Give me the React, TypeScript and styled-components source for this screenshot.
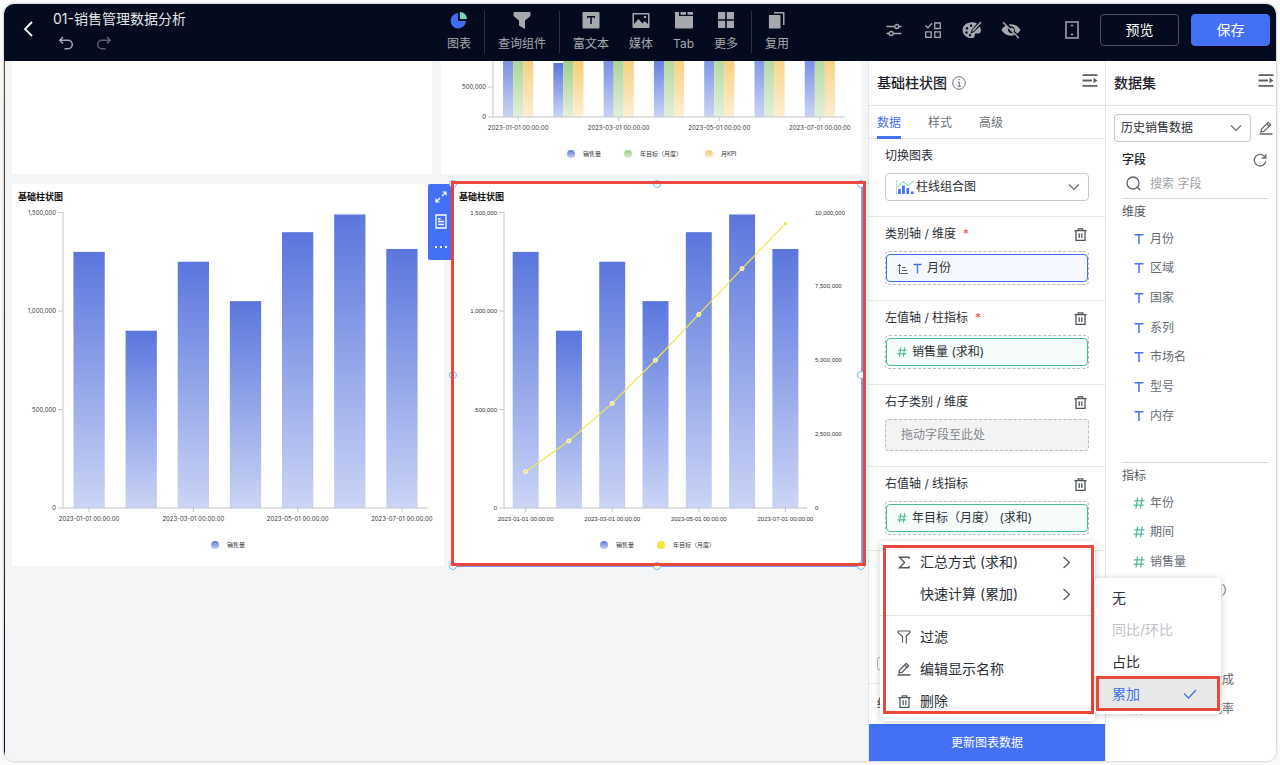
import React from "react";
import styled, { createGlobalStyle, css } from "styled-components";

const C = {
  blue: "#4370f5",
  navy: "#040b1e",
  text: "#2b2f36",
  sub: "#666b73",
  line: "#e3e5e8",
  canvas: "#f4f5f7",
  green: "#4fb998",
  red: "rgba(233, 62, 50, 0.95)",
};

const Global = createGlobalStyle`
  * { box-sizing: border-box; }
  body {
    margin: 0;
    background: #fafafa;
    color: ${C.text};
    font: 12px/18px Inter, "Noto Sans CJK SC", sans-serif;
  }
  button, input, select { font: inherit; color: inherit; }
  button { cursor: pointer; border: 0; background: none; padding: 0; }
  h1, h2, h3, p, ul { margin: 0; padding: 0; font-size: 12px; font-weight: 400; }
  ul { list-style: none; }
  svg { display: block; flex: none; }
`;

const Frame = styled.div`
  margin: 4px;
  min-height: calc(100vh - 8px);
  display: flex;
  flex-direction: column;
  border-radius: 10px;
  overflow: hidden;
  background: #fff;
  box-shadow: 0 0 3px rgba(0, 0, 0, 0.3);
`;

/* ---------- top bar ---------- */

const TopBar = styled.header`
  height: 57px;
  flex: none;
  display: flex;
  align-items: center;
  background: ${C.navy};
  color: #a6a8ad;
  padding-right: 6px;
`;

const TopLeft = styled.div`
  flex: 0 1 443px;
  display: flex;
  align-items: center;
  gap: 20px;
  padding: 0 0 7px 19px;
`;

const TitleBlock = styled.div`
  display: flex;
  flex-direction: column;
  gap: 7px;
`;

const PageTitle = styled.h1`
  font-size: 14px;
  line-height: 20px;
  color: #e4e5e8;
`;

const History = styled.div`
  display: flex;
  gap: 22px;
  padding-left: 5px;
`;

const IconButton = styled.button<{ $w?: number }>`
  display: flex;
  align-items: center;
  justify-content: center;
  width: ${(p) => p.$w ?? 20}px;
  color: inherit;

  &:disabled {
    opacity: 0.55;
  }
`;

const Tools = styled.nav`
  display: flex;
  align-items: center;
  padding-bottom: 2px;
`;

const ToolGroup = styled.div`
  display: flex;
  gap: 20px;

  & + & {
    margin-left: 13px;
    padding-left: 13px;
    border-left: 1px solid #2b3142;
  }
`;

const Tool = styled.button`
  display: flex;
  flex-direction: column;
  align-items: center;
  gap: 6px;
  color: #a6a8ad;
`;

const TopRight = styled.div`
  display: flex;
  align-items: center;
  gap: 19px;
  margin-left: auto;
  padding-bottom: 6px;
`;

const TopButtons = styled.div`
  display: flex;
  align-items: center;
  gap: 12px;
`;

const TopButton = styled.button<{ $primary?: boolean }>`
  width: 79px;
  height: 32px;
  border-radius: 4px;
  border: 1px solid ${(p) => (p.$primary ? C.blue : "#4b5060")};
  background: ${(p) => (p.$primary ? C.blue : "transparent")};
  color: #fff;
  font-size: 14px;
`;

const Device = styled.div`
  margin-left: 23px;
`;

/* ---------- body ---------- */

const Body = styled.main`
  flex: 1;
  display: grid;
  grid-template-columns: minmax(0, 1fr) 237px 171px;
  background: ${C.canvas};
`;

const Canvas = styled.section`
  padding: 0 7px 40px 7px;
  border-left: 1px solid #2a2129;
  border-image: linear-gradient(#6b4423, #3a1f1a 70%, #0b1224 85%) 1;
`;

const CanvasRow = styled.div<{ $cols: string }>`
  display: grid;
  grid-template-columns: ${(p) => p.$cols};
  gap: 9px;
  margin-bottom: 10px;
`;

const Card = styled.article`
  position: relative;
  background: #fff;
`;

const CardTitle = styled.h3`
  font-size: 9px;
  line-height: 12px;
  font-weight: 700;
  padding: 7px 6px 0;
  color: #111;
`;

const ChartSvg = styled.svg<{ $font?: string }>`
  width: 100%;
  height: auto;
  overflow: hidden;
  font-family: ${(p) => p.$font ?? "Inter"}, "Noto Sans CJK SC", sans-serif;
  font-size: 6px;
  fill: #333;
`;

const SelectionRing = styled.div`
  position: absolute;
  inset: 0 -2px -1px 0;
  border: solid #7f98f4;
  border-width: 0 2px 2px 0;
`;

const Handle = styled.i<{ $x: string; $y: string }>`
  position: absolute;
  left: ${(p) => p.$x};
  top: ${(p) => p.$y};
  width: 8px;
  height: 8px;
  margin: -4px;
  border: 1px solid #6bb9f2;
  border-radius: 50%;
  background: #fff;
`;

const RedMark = styled.div<{ $inset: string }>`
  position: absolute;
  inset: ${(p) => p.$inset};
  border: 3px solid ${C.red};
  pointer-events: none;
`;

const SideTools = styled.div`
  position: absolute;
  top: 0;
  right: 100%;
  width: 25px;
  height: 76px;
  display: flex;
  flex-direction: column;
  align-items: center;
  color: #fff;
  background: ${C.blue};
  border-radius: 2px 0 0 2px;

  button { flex: 1; }
`;

/* ---------- panels ---------- */

const Panel = styled.aside`
  position: relative;
  display: flex;
  flex-direction: column;
  background: #fff;
  border-left: 1px solid ${C.line};
`;

const ConfigPanel = styled(Panel)`
  z-index: 2;
`;

const PanelHead = styled.div<{ $end: number }>`
  height: 45px;
  display: flex;
  align-items: center;
  gap: 5px;
  padding: 0 ${(p) => p.$end}px 0 8px;
  border-bottom: 1px solid ${C.line};
`;

const PanelTitle = styled.h2`
  font-size: 14px;
  line-height: 20px;
  font-weight: 500;
  color: #1d2129;
`;

const HeadAction = styled.button`
  margin: 0 0 5px auto;
  color: #5c6066;
`;

const Tabs = styled.div`
  height: 33px;
  display: flex;
  gap: 27px;
  padding-left: 8px;
  border-bottom: 1px solid ${C.line};
`;

const Tab = styled.button<{ $on?: boolean }>`
  height: 33px;
  padding-top: 3px;
  color: ${(p) => (p.$on ? C.blue : "#6b7078")};
  border-bottom: 3px solid ${(p) => (p.$on ? C.blue : "transparent")};
`;

const Section = styled.section`
  display: flex;
  flex-direction: column;
  gap: 8px;
  padding: 8px 16px 15px;
  border-bottom: 1px solid ${C.line};
`;

const SectionHead = styled.div`
  display: flex;
  justify-content: space-between;
  align-items: center;
  padding-right: 2px;
  color: #4f545c;
`;

const SectionLabel = styled.label`
  display: flex;
  gap: 7px;
  color: ${C.text};
`;

const Required = styled.span`
  color: #f0504a;
`;

const SelectBox = styled.div<{ $pad: number }>`
  display: flex;
  align-items: center;
  flex: 1;
  min-width: 0;
  height: 28px;
  padding: 0 8px 0 ${(p) => p.$pad}px;
  border: 1px solid #c3c6cb;
  border-radius: 4px;
  color: ${C.sub};
`;

const Select = styled.select`
  flex: 1;
  min-width: 0;
  height: 26px;
  margin-right: -12px;
  padding: 0;
  border: 0;
  outline: 0;
  appearance: none;
  background: transparent;
  color: ${C.text};
`;

const DropZone = styled.div<{ $empty?: boolean }>`
  position: relative;
  display: flex;
  align-items: center;
  height: ${(p) => (p.$empty ? 32 : 34)}px;
  border: 1px dashed #b9bcc1;
  border-radius: 4px;
  ${(p) =>
    p.$empty &&
    css`
      padding-left: 15px;
      background: #f3f3f3;
      color: #83868c;
    `}
`;

const Chip = styled.button<{ $tone: "blue" | "green" }>`
  flex: 1;
  height: 28px;
  display: flex;
  align-items: center;
  gap: 5px;
  padding-left: 10px;
  border: 1px solid ${(p) => (p.$tone === "blue" ? C.blue : C.green)};
  border-radius: 4px;
  background: ${(p) => (p.$tone === "blue" ? "#f6f8ff" : "#f6fcfa")};
  color: ${C.text};
`;

const OptionSection = styled.section`
  min-height: 133px;
  display: flex;
  align-items: flex-end;
  padding: 0 8px 13px;
  border-bottom: 1px solid ${C.line};
`;

const Checkbox = styled.input`
  appearance: none;
  width: 13px;
  height: 13px;
  margin: 0;
  border: 1px solid #b9bcc1;
  border-radius: 2px;
`;

const LastSection = styled.section`
  height: 40px;
  padding: 11px 8px;
`;

const UpdateButton = styled.button`
  height: 37px;
  margin-top: auto;
  background: ${C.blue};
  color: #fff;
`;

/* ---------- menus ---------- */

const Menu = styled.div`
  position: absolute;
  background: #fff;
  border-radius: 4px;
  box-shadow: 0 1px 7px rgba(0, 0, 0, 0.2);
`;

const FieldMenu = styled(Menu)`
  top: 39px;
  left: -6px;
  width: 215px;
  padding: 5px 0 4px;
`;

const SubMenu = styled(Menu)`
  top: 37px;
  left: 100%;
  width: 126px;
  padding: 4px 0;
`;

const MenuItem = styled.button<{ $disabled?: boolean; $on?: boolean }>`
  position: relative;
  width: 100%;
  height: 32px;
  display: flex;
  align-items: center;
  gap: 9px;
  padding: 0 24px 0 17px;
  font-size: 14px;
  text-align: left;
  color: ${(p) => (p.$disabled ? "#c2c4c9" : p.$on ? C.blue : C.text)};
  background: ${(p) => (p.$on ? "#e7e9e9" : "transparent")};

  svg { color: ${(p) => (p.$on ? C.blue : "#565b63")}; }
  svg:last-of-type:not(:first-child) { margin-left: auto; }
`;

const MenuIcon = styled.span`
  width: 14px;
  display: flex;
  justify-content: center;
`;

const MenuRule = styled.hr`
  margin: 5px 0;
  border: 0;
  border-top: 1px solid ${C.line};
`;

/* ---------- dataset ---------- */

const SourceRow = styled.div`
  display: flex;
  align-items: center;
  gap: 8px;
  padding: 8px 3px 0 8px;
  color: ${C.sub};
`;

const FieldArea = styled.div`
  padding: 9px 8px 0 16px;
`;

const FieldHead = styled.div`
  display: flex;
  justify-content: space-between;
  color: ${C.sub};
`;

const FieldTitle = styled.h3`
  font-weight: 500;
  color: #1d2129;
`;

const Search = styled.label`
  display: flex;
  align-items: center;
  gap: 9px;
  height: 30px;
  padding-left: 4px;
  color: #5c6066;
  border-bottom: 1px solid #d5d7da;
`;

const SearchInput = styled.input`
  flex: 1;
  min-width: 0;
  border: 0;
  outline: 0;
  padding: 0;
  background: none;

  &::placeholder { color: #a0a3a9; opacity: 1; }
`;

const GroupTitle = styled.h3<{ $ruled?: boolean }>`
  padding: 3px 0 2px;
  line-height: 20px;
  color: #55595f;
  ${(p) =>
    p.$ruled &&
    css`
      margin-top: 31px;
      border-top: 1px solid #d5d7da;
    `}
`;

const FieldList = styled.ul<{ $h: number }>`
  height: ${(p) => p.$h}px;
  display: flex;
  flex-direction: column;
`;

const FieldItem = styled.li`
  flex: 1;
  display: flex;
  align-items: center;
  gap: 5px;
  padding-left: 11px;
  white-space: nowrap;
  color: ${C.sub};
`;

/* ---------- icons ---------- */

type IcoProps = { w: number; h: number; s?: number; fill?: boolean; children: React.ReactNode };
const Ico = ({ w, h, s = 1.3, fill, children }: IcoProps) => (
  <svg
    width={w}
    height={h}
    viewBox={`0 0 ${w} ${h}`}
    fill={fill ? "currentColor" : "none"}
    stroke={fill ? "none" : "currentColor"}
    strokeWidth={s}
    aria-hidden="true"
  >
    {children}
  </svg>
);

const BlueIcon = styled.span`
  color: ${C.blue};
`;
const GreenIcon = styled.span`
  color: ${C.green};
`;

const ChevronDown = () => <Ico w={12} h={8} s={1.2}><path d="M1 1.5l5 5 5-5" /></Ico>;
const ChevronRight = () => <Ico w={9} h={13}><path d="M1.5 1l6 5.500-6 5.500" /></Ico>;
const Trash = () => (
  <Ico w={13} h={13} s={1.3}><path d="M.5 2.700h12M4.300 2.500V.8h4.400v1.700M2 3v9.300h9V3M5.200 5.300v4.600M7.800 5.300v4.600" /></Ico>
);
const TextType = () => (
  <BlueIcon><Ico w={12} h={12} s={1.5}><path d="M1.500 1.800h9M6 1.800V11" /></Ico></BlueIcon>
);
const NumType = ({ size = 12 }: { size?: number }) => (
  <GreenIcon>
    <svg width={size} height={size} viewBox="0 0 12 12" fill="none" stroke="currentColor" strokeWidth="1.3" aria-hidden="true">
      <path d="M4.600.5L3 11.500M9.200.5L7.600 11.500M1.200 3.800h10.300M.5 8.200h10.300" />
    </svg>
  </GreenIcon>
);
const Collapse = () => (
  <Ico w={16} h={13} s={1.8}>
    <path d="M.5 1.200h15M.5 6.500h9.500M.5 11.800h15" />
    <path d="M11.500 3.800v5.400l4-2.700z" fill="currentColor" stroke="none" />
  </Ico>
);
const Pencil = () => (
  <Ico w={14} h={14} s={1.3}><path d="M.5 13h13M2.500 8.200L9.200 1.400l2.400 2.300-6.700 6.700-2.900.6zM7.800 2.900l2.300 2.300" /></Ico>
);

const toolGroups = [
  [
    {
      label: "图表",
      icon: (
        <svg width="18" height="18" viewBox="0 0 18 18" aria-hidden="true">
          <path d="M8 2A7.700 7.700 0 1 0 16 10H8z" fill="#3f6df6" />
          <path d="M10 1A7.200 7.200 0 0 1 17 8H10z" fill="#6fd9bd" />
        </svg>
      ),
    },
  ],
  [
    {
      label: "查询组件",
      icon: <Ico w={18} h={18} fill><path d="M1.500 1h15q1 0 1 1v3l-5.500 4.500V18l-6-3.500V9.500L.5 5V2q0-1 1-1z" /></Ico>,
    },
  ],
  [
    {
      label: "富文本",
      icon: <Ico w={18} h={18} fill><path fillRule="evenodd" d="M1.500 1h15q1 0 1 1v14.500q0 1-1 1h-15q-1 0-1-1V2q0-1 1-1zM5 5v2.200h1V6.500h2.300V13H9.800V6.500H12v.7h1V5z" /></Ico>,
    },
    {
      label: "媒体",
      icon: <Ico w={18} h={18} fill><path fillRule="evenodd" d="M1.500 2h15q1 0 1 1v13q0 1-1 1h-15q-1 0-1-1V3q0-1 1-1zM2 3.500v9.500l4.500-5 4 4.500 2-2.500 3.500 3V3.500zM12 5h2v2h-2z" /></Ico>,
    },
    {
      label: "Tab",
      icon: <Ico w={20} h={18} fill><path d="M1 1h4v4h14v11.500q0 1-1 1H2q-1 0-1-1zM6.500 1H12v2.800H6.500zM13.500 1H19v2.800h-5.500z" /></Ico>,
    },
    {
      label: "更多",
      icon: <Ico w={18} h={18} fill><path d="M1 1h7.200v7.200H1zM9.800 1H17v7.200H9.800zM1 9.800h7.200V17H1zM9.800 9.800H17V17H9.800z" /></Ico>,
    },
  ],
  [
    {
      label: "复用",
      icon: (
        <Ico w={18} h={18} fill>
          <path d="M1.500 4h10q1 0 1 1v12.500h-11q-.6 0-.6-.6V5q0-1 .6-1zM6 1h9.500q1 0 1 1v12H15V2.500H6z" />
        </Ico>
      ),
    },
  ],
];

const viewIcons = [
  {
    label: "参数",
    icon: <Ico w={16} h={14}><path d="M.5 3.500h8M13 3.500h2.500M.5 10.500h2.500M7.500 10.500h8" /><circle cx="10.800" cy="3.500" r="2" /><circle cx="5.200" cy="10.500" r="2" /></Ico>,
  },
  {
    label: "选择",
    icon: <Ico w={18} h={18}><path d="M1.500 4.500l2.300 2.300L8 2.300M10.800 2h5.500v5.500h-5.500zM1.700 10.800h5.500v5.500H1.700zM10.800 10.800h5.500v5.500h-5.500z" /></Ico>,
  },
  {
    label: "主题",
    icon: (
      <Ico w={20} h={18} fill>
        <path fillRule="evenodd" d="M10 1.300c2 0 3.600.3 5 1.200L9.500 9l-1 3.500 3.500-1.500 5.700-5.500c1 1.700 1.500 4 .8 5.700-.7 1.500-2.500 1.300-4 1.300-2.300 0-1.600 1.600-1.800 2.800-.2 1.600-1.700 1.700-3.200 1.700C4.500 17 .6 13.500.6 9.200S4.500 1.300 10 1.300zM5 6a1.300 1.300 0 1 0 .01 0zM9 3.300a1.300 1.300 0 1 0 .01 0zM4.500 10.200a1.300 1.300 0 1 0 .01 0zM8 13a1.200 1.200 0 1 0 .01 0z" />
        <path d="M18.500.5l1 1-7.500 8.500-2 .8.700-2z" />
      </Ico>
    ),
  },
  {
    label: "隐藏",
    icon: (
      <Ico w={20} h={18} fill>
        <path d="M5.300 4.200C3.200 5.300 1.600 7 .5 9c1.900 3.400 5.300 5.700 9.500 5.700 1.400 0 2.700-.2 3.800-.7l-2-2A4 4 0 0 1 7 7zM7.800 3.500C12.600 2.500 17.300 4.700 19.500 9c-.8 1.500-1.900 2.700-3.200 3.700l-2.600-2.400A4 4 0 0 0 9 5.300zM9 7.500L12.300 10.800A2.300 2.300 0 0 0 9 7.500z" />
        <path d="M2.500.8l16 15.800-1 1L1.500 1.800z" />
      </Ico>
    ),
  },
];

/* ---------- charts ---------- */

const MONTHS = ["2023-01-01 00:00:00", "", "2023-03-01 00:00:00", "", "2023-05-01 00:00:00", "", "2023-07-01 00:00:00"];
const SALES = [1.3, 0.9, 1.25, 1.05, 1.4, 1.49, 1.315];
const TARGET = [1.23, 1.04, 1.27, 1.46, 1.55, 1.55, 1.52];
const KPI = [1.2, 1.1, 1.2, 1.25, 1.2, 1.4, 1.3];
const CUMULATIVE = [1.23, 2.27, 3.54, 5.0, 6.55, 8.1, 9.62];

type Legend = { x: number; fill: string; label: string };
type ChartProps = {
  id: string;
  w: number;
  h: number;
  left: number;
  right: number;
  base: number;
  unit: number;
  ticks: number[];
  series: { data: number[]; tone: string }[];
  legendY: number;
  legend: Legend[];
  line?: number[];
  font?: string;
};

const TONES: Record<string, [string, string]> = {
  blue: ["#5a76dd", "#cbd4f5"],
  green: ["#9bcb80", "#e1f0da"],
  yellow: ["#f4c765", "#fdefd3"],
};

const Chart = ({ id, w, h, left, right, base, unit, ticks, series, legendY, legend, line, font }: ChartProps) => {
  const pitch = (right - left) / 7;
  const bw = (pitch * 0.6) / series.length;
  const cx = (i: number) => left + pitch * (i + 0.5);
  const points = line?.map((v, i) => [cx(i), base - (v / 10) * unit * 1.5]);
  return (
    <ChartSvg viewBox={`0 0 ${w} ${h}`} role="img" aria-label="基础柱状图" $font={font}>
      <defs>
        {Object.entries(TONES).map(([k, [a, b]]) => (
          <linearGradient key={k} id={`${id}-${k}`} x1="0" y1="0" x2="0" y2="1">
            <stop offset="0" stopColor={a} />
            <stop offset="1" stopColor={b} />
          </linearGradient>
        ))}
      </defs>
      {series.map((s, k) =>
        s.data.map((v, i) => (
          <rect
            key={`${k}-${i}`}
            x={cx(i) - pitch * 0.3 + k * bw}
            y={base - v * unit}
            width={bw}
            height={v * unit}
            fill={`url(#${id}-${s.tone})`}
          />
        )),
      )}
      <path d={`M${left} ${base - 1.5 * unit}V${base}H${right}`} fill="none" stroke="#c4c6ca" />
      {ticks.map((t) => (
        <g key={t}>
          <path d={`M${left - 5} ${base - t * unit}H${left}`} stroke="#c4c6ca" />
          <text x={left - 7} y={base - t * unit + 2} textAnchor="end">{(t * 1e6).toLocaleString("en-US")}</text>
        </g>
      ))}
      {MONTHS.map((m, i) =>
        m ? (
          <g key={m}>
            <path d={`M${cx(i)} ${base}v4`} stroke="#c4c6ca" />
            <text x={cx(i)} y={base + 13} textAnchor="middle">{m}</text>
          </g>
        ) : null,
      )}
      {points && (
        <>
          {[0, 2.5, 5, 7.5, 10].map((t) => (
            <text key={t} x={right + 8} y={base - (t / 10) * unit * 1.5 + 2}>{(t * 1e6).toLocaleString("en-US")}</text>
          ))}
          <polyline points={points.map((p) => p.join(",")).join(" ")} fill="none" stroke="#f3e455" strokeWidth="1.2" />
          {points.map(([x, y], i) => (
            <circle key={i} cx={x} cy={y} r="2" fill="#f5e33f" stroke="#fff" />
          ))}
        </>
      )}
      {legend.map((l) => (
        <g key={l.label}>
          <circle cx={l.x} cy={legendY} r="4" fill={TONES[l.fill] ? `url(#${id}-${l.fill})` : l.fill} />
          <text x={l.x + 12} y={legendY + 2}>{l.label}</text>
        </g>
      ))}
    </ChartSvg>
  );
};

const Handles = () => (
  <>
    {["0%", "50%", "100%"].flatMap((y) =>
      ["0%", "50%", "100%"].map((x) => (x === "50%" && y === "50%" ? null : <Handle key={x + y} $x={x} $y={y} />)),
    )}
  </>
);

const DIMENSIONS = ["月份", "区域", "国家", "系列", "市场名", "型号", "内存"];
const MEASURES = ["年份", "期间", "销售量", "年目标（月度）", "", "", "月度年目标达成", "月度目标达成率"];

const FieldSection = ({ label, required, children }: { label: string; required?: boolean; children: React.ReactNode }) => (
  <Section>
    <SectionHead>
      <SectionLabel as="span">
        {label}
        {required && <Required>*</Required>}
      </SectionLabel>
      <IconButton $w={13} aria-label={`清空${label}`}><Trash /></IconButton>
    </SectionHead>
    {children}
  </Section>
);

export default function App() {
  return (
    <>
      <Global />
      <Frame>
        <TopBar>
          <TopLeft>
            <IconButton $w={10} aria-label="返回">
              <Ico w={10} h={16} s={1.8}><path d="M9 1L2 8l7 7" stroke="#fff" /></Ico>
            </IconButton>
            <TitleBlock>
              <PageTitle>01-销售管理数据分析</PageTitle>
              <History>
                <IconButton $w={16} aria-label="撤销">
                  <Ico w={16} h={14} s={1.5}><path d="M5 1L1.800 4.200 5 7.400M2 4.200h8a4.300 4.300 0 0 1 0 8.600H6.500" /></Ico>
                </IconButton>
                <IconButton $w={16} aria-label="重做" disabled>
                  <Ico w={16} h={14} s={1.5}><path d="M11 1l3.200 3.200L11 7.400M14 4.200H6a4.300 4.300 0 0 0 0 8.600h3.500" /></Ico>
                </IconButton>
              </History>
            </TitleBlock>
          </TopLeft>
          <Tools>
            {toolGroups.map((g, i) => (
              <ToolGroup key={i}>
                {g.map((t) => (
                  <Tool key={t.label}>{t.icon}{t.label}</Tool>
                ))}
              </ToolGroup>
            ))}
          </Tools>
          <TopRight>
            {viewIcons.map((v) => (
              <IconButton key={v.label} aria-label={v.label}>{v.icon}</IconButton>
            ))}
            <Device>
              <IconButton $w={18} aria-label="移动端">
                <Ico w={14} h={18} s={1.5}><path d="M1 1h12v16H1zM5.800 4.500h2.400M5.800 13.500h2.400" /></Ico>
              </IconButton>
            </Device>
            <TopButtons>
              <TopButton>预览</TopButton>
              <TopButton $primary>保存</TopButton>
            </TopButtons>
          </TopRight>
        </TopBar>

        <Body>
          <Canvas>
            <CanvasRow $cols="1fr 1fr">
              <Card />
              <Card>
                <Chart
                  id="top" w={420} h={113} left={52} right={404} base={56} unit={60} ticks={[0, 0.5]}
                  series={[{ data: SALES, tone: "blue" }, { data: TARGET, tone: "green" }, { data: KPI, tone: "yellow" }]}
                  legendY={93}
                  legend={[
                    { x: 130, fill: "blue", label: "销售量" },
                    { x: 187, fill: "green", label: "年目标（月度）" },
                    { x: 268, fill: "yellow", label: "月KPI" },
                  ]}
                />
              </Card>
            </CanvasRow>
            <CanvasRow $cols="432fr 408fr">
              <Card>
                <CardTitle>基础柱状图</CardTitle>
                <Chart
                  id="left" w={432} h={363} left={51} right={416} base={305} unit={197} ticks={[0, 0.5, 1, 1.5]}
                  series={[{ data: SALES, tone: "blue" }]}
                  legendY={342}
                  legend={[{ x: 203, fill: "blue", label: "销售量" }]}
                />
              </Card>
              <Card>
                <CardTitle>基础柱状图</CardTitle>
                <Chart
                  id="main" w={408} h={363} left={51} right={354} base={305} unit={197} ticks={[0, 0.5, 1, 1.5]}
                  series={[{ data: SALES, tone: "blue" }]}
                  line={CUMULATIVE}
                  font="Liberation Sans"
                  legendY={342}
                  legend={[
                    { x: 151, fill: "blue", label: "销售量" },
                    { x: 208, fill: "#f5e642", label: "年目标（月度）" },
                  ]}
                />
                <SelectionRing />
                <SideTools>
                  <IconButton aria-label="放大">
                    <Ico w={12} h={12} s={1.2}><path d="M7.500 1H11v3.500M11 1L7 5M4.500 11H1V7.500M1 11l4-4" /></Ico>
                  </IconButton>
                  <IconButton aria-label="数据明细">
                    <Ico w={12} h={15} s={1.3}><path d="M1 1h10v13H1zM3 5h2.500M3 7.500h6M3 10.500h6" /></Ico>
                  </IconButton>
                  <IconButton aria-label="更多操作">
                    <Ico w={12} h={4} fill><path d="M0 1h2v2H0zM5 1h2v2H5zM10 1h2v2h-2z" /></Ico>
                  </IconButton>
                </SideTools>
                <Handles />
                <RedMark $inset="-3px -5px 0 -2px" />
              </Card>
            </CanvasRow>
          </Canvas>

          <ConfigPanel>
            <PanelHead $end={7}>
              <PanelTitle>基础柱状图</PanelTitle>
              <Ico w={14} h={14} s={1}><circle cx="7" cy="7" r="6.300" stroke="#6b7078" /><path d="M5.800 6h1.500v4.300M5.500 10.300h3.500M6.500 3.600h1.400" stroke="#6b7078" /></Ico>
              <HeadAction aria-label="收起配置"><Collapse /></HeadAction>
            </PanelHead>
            <Tabs role="tablist">
              <Tab role="tab" aria-selected $on>数据</Tab>
              <Tab role="tab">样式</Tab>
              <Tab role="tab">高级</Tab>
            </Tabs>
            <Section>
              <SectionLabel htmlFor="chart-type">切换图表</SectionLabel>
              <SelectBox $pad={10}>
                <svg width="20" height="16" viewBox="0 0 20 16" aria-hidden="true">
                  <path d="M.5 1v14.500" stroke="#c9ccd2" fill="none" />
                  <path d="M2.200 10h2.600v5H2.200zM6.200 6.500h2.600V15H6.200zM10.500 9h2.600v6h-2.600zM15 12.500h2.600V15H15z" fill="#3f6df6" />
                  <path d="M1.500 8L7 2.500l5 4 5.500-4.500" stroke="#5fceb1" fill="none" />
                </svg>
                <Select id="chart-type"><option>柱线组合图</option></Select>
                <ChevronDown />
              </SelectBox>
            </Section>
            <FieldSection label="类别轴 / 维度" required>
              <DropZone>
                <Chip $tone="blue">
                  <Ico w={11} h={11} s={1}><path d="M2.500 1v9.500H11M.5 2.500h3.500M5 4.500h3.500M5 7.500h5" stroke="#5c6066" /></Ico>
                  <BlueIcon><Ico w={9} h={11}><path d="M.5 1.500h8M4.500 1.500v9" /></Ico></BlueIcon>
                  月份
                </Chip>
              </DropZone>
            </FieldSection>
            <FieldSection label="左值轴 / 柱指标" required>
              <DropZone>
                <Chip $tone="green"><NumType size={10} />销售量 (求和)</Chip>
              </DropZone>
            </FieldSection>
            <FieldSection label="右子类别 / 维度">
              <DropZone $empty>拖动字段至此处</DropZone>
            </FieldSection>
            <FieldSection label="右值轴 / 线指标">
              <DropZone>
                <Chip $tone="green"><NumType size={10} />年目标（月度） (求和)</Chip>
                <FieldMenu role="menu">
                  <MenuItem role="menuitem">
                    <MenuIcon><Ico w={12} h={13} s={1.4}><path d="M11 3V1.200H1.500l5 5.300-5 5.300H11V10" /></Ico></MenuIcon>
                    汇总方式 (求和)
                    <ChevronRight />
                  </MenuItem>
                  <MenuItem role="menuitem">
                    <MenuIcon />
                    快速计算 (累加)
                    <ChevronRight />
                  </MenuItem>
                  <MenuRule />
                  <MenuItem role="menuitem">
                    <MenuIcon><Ico w={14} h={14} s={1.2}><path d="M5.500 12.500V6.500L1 2.500V1h12v1.500L9.300 6v7.500" /></Ico></MenuIcon>
                    过滤
                  </MenuItem>
                  <MenuItem role="menuitem">
                    <MenuIcon><Pencil /></MenuIcon>
                    编辑显示名称
                  </MenuItem>
                  <MenuItem role="menuitem">
                    <MenuIcon><Trash /></MenuIcon>
                    删除
                  </MenuItem>
                  <RedMark $inset="4px 1px 7px 3px" />
                  <SubMenu role="menu">
                    <MenuItem role="menuitem">无</MenuItem>
                    <MenuItem role="menuitem" $disabled>同比/环比</MenuItem>
                    <MenuItem role="menuitem">占比</MenuItem>
                    <MenuItem role="menuitem" $on>
                      <span>累加</span>
                      <Ico w={14} h={10}><path d="M1 4.500l4.500 4.500L13 1" /></Ico>
                      <RedMark $inset="-2px 1px -1px 1px" />
                    </MenuItem>
                  </SubMenu>
                </FieldMenu>
              </DropZone>
            </FieldSection>
            <OptionSection>
              <Checkbox type="checkbox" aria-label="显示" />
            </OptionSection>
            <LastSection>结</LastSection>
            <UpdateButton>更新图表数据</UpdateButton>
          </ConfigPanel>

          <Panel>
            <PanelHead $end={2}>
              <PanelTitle>数据集</PanelTitle>
              <HeadAction aria-label="收起数据集"><Collapse /></HeadAction>
            </PanelHead>
            <SourceRow>
              <SelectBox $pad={6}>
                <Select aria-label="数据集"><option>历史销售数据</option></Select>
                <ChevronDown />
              </SelectBox>
              <IconButton $w={14} aria-label="编辑数据集"><Pencil /></IconButton>
            </SourceRow>
            <FieldArea>
              <FieldHead>
                <FieldTitle>字段</FieldTitle>
                <IconButton $w={16} aria-label="刷新">
                  <Ico w={14} h={14}><path d="M12.300 4.600A5.800 5.800 0 1 0 12.800 8.300M12.800 1v4H8.800" /></Ico>
                </IconButton>
              </FieldHead>
              <Search>
                <Ico w={15} h={15}><circle cx="7" cy="7" r="6" /><path d="M11.300 11.300l3 3" /></Ico>
                <SearchInput placeholder="搜索 字段" aria-label="搜索 字段" />
              </Search>
              <GroupTitle>维度</GroupTitle>
              <FieldList $h={207}>
                {DIMENSIONS.map((d) => <FieldItem key={d}><TextType />{d}</FieldItem>)}
              </FieldList>
              <GroupTitle $ruled>指标</GroupTitle>
              <FieldList $h={236}>
                {MEASURES.map((d, i) => <FieldItem key={i}><NumType />{d}</FieldItem>)}
              </FieldList>
            </FieldArea>
          </Panel>
        </Body>
      </Frame>
    </>
  );
}
